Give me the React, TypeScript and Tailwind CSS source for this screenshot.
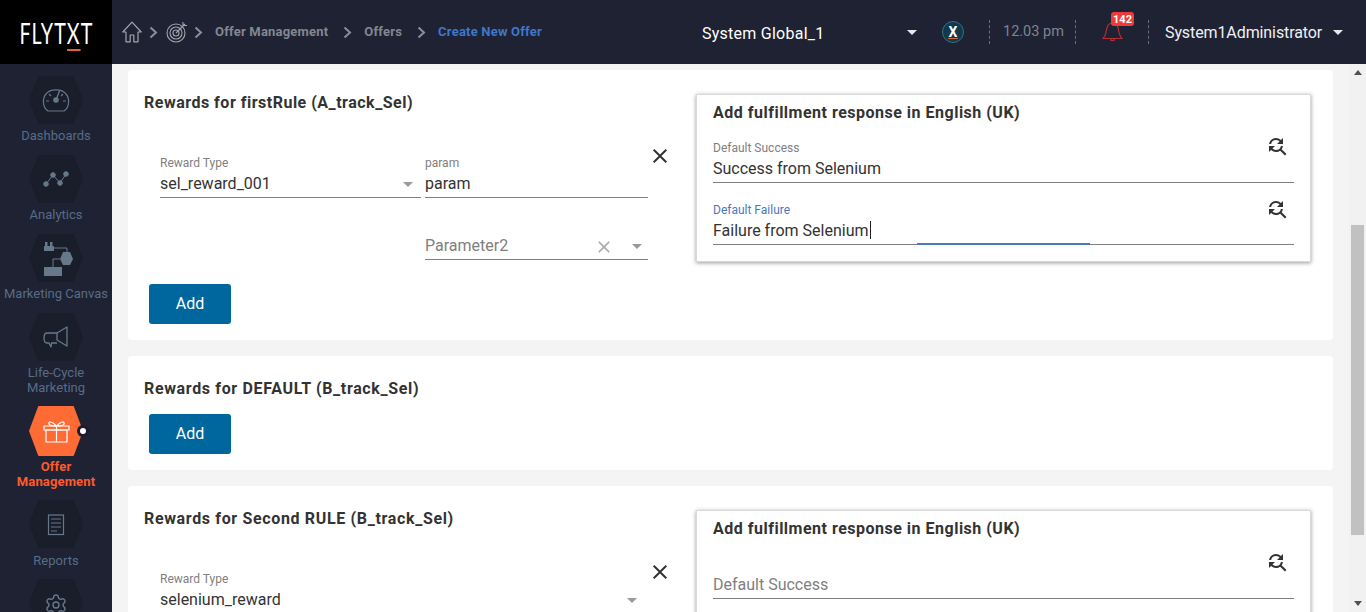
import React from "react";
import { MdClose, MdFindReplace } from "react-icons/md";
import { Settings } from "lucide-react";

function Hex({ fill = "#1a1d2a", h = 48, children }: { fill?: string; h?: number; children?: React.ReactNode }) {
  return (
    <svg width={54} height={h} viewBox={`0 0 54 ${h}`} className="block shrink-0" fill="none">
      <polygon points={`10,1 44,1 53,${h / 2} 44,${h - 1} 10,${h - 1} 1,${h / 2}`} fill={fill} stroke={fill} strokeWidth={2} strokeLinejoin="round" />
      {children}
    </svg>
  );
}

const ic = "#66798a";

function NavItem({ icon, lines, active, fill, h, tight, low }: { icon: React.ReactNode; lines: string[]; active?: boolean; fill?: string; h?: number; tight?: boolean; low?: boolean }) {
  return (
    <div className={`flex flex-col items-center ${tight || low ? "mb-[11px]" : "mb-[12px]"}`}>
      <div className="relative">
        <Hex fill={fill} h={h}>{icon}</Hex>
        {active && (
          <span className="absolute left-[48px] top-[19px] flex h-[12px] w-[12px] items-center justify-center rounded-full bg-[#1a1d2a]">
            <span className="h-[6px] w-[6px] rounded-full bg-white" />
          </span>
        )}
      </div>
      <div className={`text-center text-[13px] leading-[15px] ${active ? "mt-[3px] font-bold tracking-[0.15px] text-[#ff5a2c]" : low ? "mt-[5px] text-[#566c88]" : "mt-[4px] text-[#566c88]"}`}>
        {lines.map((l) => (
          <div key={l} className="whitespace-nowrap">{l}</div>
        ))}
      </div>
    </div>
  );
}

function Sidebar() {
  return (
    <aside className="flex h-full w-[112px] shrink-0 flex-col overflow-hidden bg-[#1e2233] pt-[12px]">
      <NavItem
        lines={["Dashboards"]}
        icon={
          <g stroke={ic} strokeWidth={1.2}>
            <path d="M19 35 C13 31 13.5 22 17 18 C21 12.5 33 12.5 37 18 C40.5 22 41 31 35 35 Z" />
            <path d="M27 24 L30.5 15" strokeWidth={1.4} />
            <circle cx={27} cy={24} r={2.2} fill={ic} />
            <path d="M17 25h3M34 25h3M20 18l2 2M34 18l-2 2" />
          </g>
        }
      />
      <NavItem
        lines={["Analytics"]}
        icon={
          <g stroke={ic} strokeWidth={1} fill={ic}>
            <path d="M17 29 L24 20 L31 28 L37 19" fill="none" />
            <circle cx={17} cy={29} r={2.3} />
            <circle cx={24} cy={20} r={2.3} />
            <circle cx={31} cy={28} r={2.3} />
            <circle cx={37} cy={19} r={2.3} />
          </g>
        }
      />
      <NavItem
        lines={["Marketing Canvas"]}
        icon={
          <g fill={ic}>
            <rect x={15} y={12} width={10} height={5} rx={0.5} />
            <rect x={16} y={8} width={2.5} height={4} />
            <rect x={21} y={8} width={2.5} height={4} />
            <polygon points="34,18 41,18 44,25 41,31 34,31 31,25" />
            <rect x={15} y={33} width={18} height={9} />
            <path d="M25 14H38V18M31 25H24V33" fill="none" stroke={ic} strokeWidth={1} />
          </g>
        }
      />
      <NavItem
        tight
        lines={["Life-Cycle", "Marketing"]}
        icon={
          <g stroke={ic} strokeWidth={1.3} strokeLinejoin="round">
            <path d="M28 20 L38 14 V33 L28 27 Z" />
            <path d="M28 20 H18 C14 20 14 30 18 30 H20 L22 34 L22.5 30 H28" />
          </g>
        }
      />
      <NavItem
        active
        tight
        h={50}
        fill="#ff6b35"
        lines={["Offer", "Management"]}
        icon={
          <g stroke="#fff" strokeWidth={1.2} strokeLinejoin="round">
            <rect x={15} y={20} width={25} height={4} />
            <rect x={17} y={24} width={21} height={12} />
            <path d="M27.5 20V36" />
            <path d="M27.5 20 C23 15 19 15 20 18 C20.5 20 24 20 27.5 20 C31 20 34.5 20 35 18 C36 15 32 15 27.5 20Z" />
          </g>
        }
      />
      <NavItem
        low
        lines={["Reports"]}
        icon={
          <g stroke={ic} strokeWidth={1.2}>
            <rect x={19.5} y={15} width={15} height={19.5} />
            <path d="M22 19h10M22 23h10M22 27h10M22 31h6" />
          </g>
        }
      />
      <NavItem
        lines={[]}
        icon={<Settings x={15} y={14} size={24} color={ic} strokeWidth={1.4} />}
      />
    </aside>
  );
}

function Chevron() {
  return (
    <svg width={9} height={13} viewBox="0 0 9 13" fill="none" className="shrink-0">
      <path d="M1.5 1.5 L7 6.5 L1.5 11.5" stroke="#8b8f98" strokeWidth={2} />
    </svg>
  );
}

function Caret({ color = "#999", w = 10 }: { color?: string; w?: number }) {
  return (
    <svg width={w} height={5} viewBox="0 0 10 5" className="shrink-0" preserveAspectRatio="none">
      <polygon points="0,0 10,0 5,5" fill={color} />
    </svg>
  );
}

function Sep() {
  return <span className="block h-[24px] w-0 shrink-0 border-l border-dashed border-[#6b6f7c]" />;
}

function Header() {
  return (
    <header className="flex h-[64px] shrink-0 items-center bg-[#1e2233] text-[13px]">
      <div className="flex h-full w-[112px] shrink-0 items-center justify-center overflow-hidden bg-black">
        <span className="relative inline-block scale-x-[0.68] whitespace-nowrap font-['Lato'] text-[29px] font-normal leading-none tracking-[1.5px] text-white">
          FLYT
          <span className="relative">
            X
            <span className="absolute bottom-[-1px] left-0 h-[2px] w-full bg-[#e0622d]" />
          </span>
          T
        </span>
      </div>
      <div className="ml-[10px] flex w-[420px] shrink-0 items-center whitespace-nowrap tracking-[0.2px]">
        <svg width={20} height={22} viewBox="0 0 20 22" fill="none" className="shrink-0" stroke="#a2a5ac" strokeWidth={1.2}>
          <path d="M0.8 11 L10 1.2 L19.2 11 H16 V20.8 H11.8 V14 H8.2 V20.8 H4 V11 Z" strokeLinejoin="round" />
        </svg>
        <span className="ml-[7px]"><Chevron /></span>
        <svg width={22} height={22} viewBox="0 0 22 22" fill="none" className="ml-[8px] shrink-0" stroke="#a2a5ac" strokeWidth={1.1}>
          <circle cx={10} cy={12} r={9} />
          <circle cx={10} cy={12} r={6} />
          <circle cx={10} cy={12} r={3} />
          <path d="M10 12 L19 3 M17 1 V4.5 H21" />
        </svg>
        <span className="ml-[6px]"><Chevron /></span>
        <span className="ml-[12px] font-bold text-[#83878f]">Offer Management</span>
        <span className="ml-[15px]"><Chevron /></span>
        <span className="ml-[12px] font-bold text-[#83878f]">Offers</span>
        <span className="ml-[15px]"><Chevron /></span>
        <span className="ml-[12px] font-bold text-[#3f77cb]">Create New Offer</span>
      </div>
      <span className="ml-[160px] mt-[4px] w-[205px] shrink-0 text-[16px] tracking-[0.25px] text-white">System Global_1</span>
      <Caret color="#e8e8e8" />
      <span className="relative ml-[25px] flex h-[22px] w-[22px] shrink-0 items-center justify-center rounded-full border border-[#2f7486] bg-[#12384a]">
        <span className="text-[14px] font-bold leading-none text-white">X</span>
        <span className="absolute bottom-[3px] h-[1.5px] w-[10px] bg-[#e0622d]" />
      </span>
      <span className="ml-[25px]"><Sep /></span>
      <span className="ml-[13px] w-[72px] shrink-0 text-[14.5px] text-[#80848f]">12.03 pm</span>
      <Sep />
      <span className="relative ml-[26px] shrink-0">
        <svg width={21} height={20} viewBox="0 0 21 20" fill="none" stroke="#b5303a" strokeWidth={1.2} className="block">
          <path d="M1 16.5 C3.5 14 4 11 4.5 8 C5 4 7 1 10.5 1 C14 1 16 4 16.5 8 C17 11 17.5 14 20 16.5 Z" strokeLinejoin="round" />
          <path d="M9 17v1.5h3V17" />
        </svg>
        <span className="absolute left-[9px] top-[-10px] flex h-[14px] w-[23px] items-center justify-center rounded-[3px] bg-[#f03a3a] text-[11px] font-bold leading-none text-white">142</span>
      </span>
      <span className="ml-[25px]"><Sep /></span>
      <span className="ml-[16px] mt-[1px] shrink-0 text-[16px] tracking-[-0.1px] text-[#eef0f4]">System1Administrator</span>
      <span className="ml-[11px]"><Caret color="#e8e8e8" /></span>
    </header>
  );
}

function Underlined({ children, className = "", tall }: { children: React.ReactNode; className?: string; tall?: boolean }) {
  return (
    <div className={`relative flex items-start border-b border-[#808080] text-[16px] leading-[24px] text-[#333] ${tall ? "h-[27px]" : "h-[26px]"} ${className}`}>
      {children}
    </div>
  );
}

function Label({ children, blue }: { children: React.ReactNode; blue?: boolean }) {
  return <div className={`h-[14px] text-[12px] leading-[14px] ${blue ? "text-[#4a78c0]" : "text-[#808080]"}`}>{children}</div>;
}

function RespField({ label, value, placeholder, focused }: { label?: string; value?: string; placeholder?: string; focused?: boolean }) {
  return (
    <div className="relative">
      <div className={focused ? "mb-[1px]" : "mb-[2px]"}><Label blue={focused}>{label ?? "\u00a0"}</Label></div>
      <Underlined tall={focused}>
        {value ? (
          <span className="text-[#333]">
            {value}
            {focused && <span className="ml-[1px] inline-block h-[18px] w-[1px] translate-y-[3px] bg-[#222]" />}
          </span>
        ) : (
          <span className="text-[#808080]">{placeholder}</span>
        )}
        {focused && <span className="absolute bottom-[-1px] left-[204px] h-[2px] w-[173px] bg-[#4a78c0]" />}
      </Underlined>
      <MdFindReplace size={24} color="#333" className={`absolute right-[5px] ${focused ? "top-[-6px]" : "top-[-7px]"}`} />
    </div>
  );
}

function ResponseBox({ first, second }: { first: React.ReactNode; second: React.ReactNode }) {
  return (
    <div className="ml-auto mr-[22px] w-[615px] shrink-0 border border-[#d9d9d9] bg-white px-[16px] pb-[16px] pt-[6px] shadow-[0_1px_4px_rgba(0,0,0,0.4)]">
      <div className="text-[16px] font-bold leading-[24px] tracking-[0.5px] text-[#333]">Add fulfillment response in English (UK)</div>
      <div className="mt-[16px]">{first}</div>
      <div className="mt-[20px]">{second}</div>
    </div>
  );
}

function Title({ children, wide }: { children: React.ReactNode; wide?: boolean }) {
  return <h2 className={`text-[16px] font-bold leading-[24px] text-[#333] ${wide ? "tracking-[0.65px]" : "tracking-[0.5px]"}`}>{children}</h2>;
}

function AddButton() {
  return (
    <button className="ml-[5px] flex h-[40px] w-[82px] items-center justify-center rounded-[3px] bg-[#00679e] text-[16px] text-white">Add</button>
  );
}

function CloseRow() {
  return <MdClose size={24} color="#333" className="-mt-[12px] shrink-0" />;
}

function Main() {
  return (
    <main className="min-w-0 flex-1 overflow-hidden pl-[16px] pt-[6px]">
      <div className="mr-[16px] flex flex-col gap-[16px]">
        <section className="flex items-start rounded-[4px] bg-white pb-[16px]">
          <div className="w-[552px] shrink-0 pl-[16px] pt-[21px]">
            <Title>Rewards for firstRule (A_track_Sel)</Title>
            <div className="mt-[41px] flex items-start pl-[16px]">
              <div className="w-[261px] shrink-0">
                <div className="mb-[2px]"><Label>Reward Type</Label></div>
                <Underlined className="justify-between">
                  <span>sel_reward_001</span>
                  <span className="mr-[8px] mt-[10px]"><Caret /></span>
                </Underlined>
              </div>
              <div className="ml-[4px] w-[223px] shrink-0">
                <div className="mb-[2px]"><Label>param</Label></div>
                <Underlined>param</Underlined>
              </div>
              <CloseRow />
            </div>
            <div className="ml-[281px] mt-[36px] w-[223px]">
              <Underlined>
                <span className="flex-1 text-[#808080]">Parameter2</span>
                <MdClose size={20} color="#aaa" className="mr-[18px] mt-[3px]" />
                <span className="mr-[6px] mt-[10px]"><Caret /></span>
              </Underlined>
            </div>
            <div className="mt-[24px]"><AddButton /></div>
          </div>
          <div className="flex flex-1 pt-[24px]">
            <ResponseBox
              first={<RespField label="Default Success" value="Success from Selenium" />}
              second={<RespField label="Default Failure" value="Failure from Selenium" focused />}
            />
          </div>
        </section>

        <section className="rounded-[4px] bg-white pb-[16px] pl-[16px] pt-[21px]">
          <Title wide>Rewards for DEFAULT (B_track_Sel)</Title>
          <div className="mt-[13px]"><AddButton /></div>
        </section>

        <section className="flex items-start rounded-[4px] bg-white pb-[16px]">
          <div className="w-[552px] shrink-0 pl-[16px] pt-[21px]">
            <Title wide>Rewards for Second RULE (B_track_Sel)</Title>
            <div className="mt-[41px] flex items-start pl-[16px]">
              <div className="w-[488px] shrink-0">
                <div className="mb-[2px]"><Label>Reward Type</Label></div>
                <Underlined className="justify-between">
                  <span>selenium_reward</span>
                  <span className="mr-[11px] mt-[10px]"><Caret /></span>
                </Underlined>
              </div>
              <CloseRow />
            </div>
          </div>
          <div className="flex flex-1 pt-[24px]">
            <ResponseBox
              first={<RespField placeholder="Default Success" />}
              second={<RespField placeholder="" />}
            />
          </div>
        </section>
      </div>
    </main>
  );
}

function Scrollbar() {
  return (
    <div className="flex w-[17px] shrink-0 flex-col items-center overflow-hidden bg-[#f1f1f1]">
      <div className="flex h-[17px] shrink-0 items-center justify-center">
        <svg width={8} height={5} viewBox="0 0 8 5"><polygon points="4,0 8,5 0,5" fill="#505050" /></svg>
      </div>
      <div className="ml-[-1px] mt-[144px] h-[310px] w-[13px] shrink-0 bg-[#c1c1c1]" />
      <div className="flex flex-1 items-end pb-[6px]">
        <svg width={8} height={5} viewBox="0 0 8 5"><polygon points="0,0 8,0 4,5" fill="#505050" /></svg>
      </div>
    </div>
  );
}

export default function App() {
  return (
    <div className="flex h-[612px] w-[1366px] flex-col overflow-hidden bg-[#f4f4f4] font-['Roboto',sans-serif]">
      <Header />
      <div className="flex min-h-0 flex-1">
        <Sidebar />
        <Main />
        <Scrollbar />
      </div>
    </div>
  );
}
